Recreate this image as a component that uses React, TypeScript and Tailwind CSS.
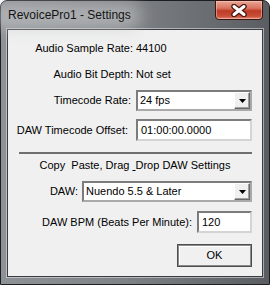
import React from "react";

const font = { fontFamily: '"Liberation Sans", Arial, sans-serif' };

const Arrow = () => (
  <div className="flex h-full w-[16px] items-center justify-center border border-t-white border-l-white border-b-[#696969] border-r-[#696969] bg-[#f0f0f0] shadow-[inset_-1px_-1px_0_#a0a0a0]">
    <svg width="7" height="4" viewBox="0 0 7 4">
      <path d="M0 0h7L3.5 4z" fill="#000" />
    </svg>
  </div>
);

const Combo = ({ value, width }: { value: string; width: string }) => (
  <div
    className={`flex h-[21px] ${width} items-stretch border-2 border-t-[#7c7c7c] border-l-[#7c7c7c] border-b-[#a9a9a9] border-r-[#a9a9a9] bg-white`}
  >
    <div className="flex flex-1 items-center pl-[2px] text-[11px] text-black">{value}</div>
    <Arrow />
  </div>
);

const Field = ({ value, width }: { value: string; width: string }) => (
  <div
    className={`flex h-[22px] ${width} items-center border-2 border-t-[#7c7c7c] border-l-[#7c7c7c] border-b-[#d4d4d4] border-r-[#d4d4d4] bg-white pl-[3px] text-[11px] text-black`}
  >
    {value}
  </div>
);

const CloseButton = () => (
  <div className="absolute right-[6px] top-[-1px] flex h-[20px] w-[48px] items-center justify-center rounded-b-[4px] border border-[#3b1510] bg-[linear-gradient(to_bottom,#e9a796_0%,#d9735f_40%,#bf3b25_55%,#c9503a_85%,#e38a6f_100%)] shadow-[inset_0_0_0_1px_rgba(255,220,210,0.45)]">
    <svg width="18" height="13" viewBox="0 0 18 13">
      <path d="M4 2.5l10 8M14 2.5L4 10.5" stroke="#4a1a12" strokeWidth="5.5" strokeLinecap="round" />
      <path d="M4 2.5l10 8M14 2.5L4 10.5" stroke="#ffffff" strokeWidth="3" strokeLinecap="round" />
    </svg>
  </div>
);

export default function App() {
  return (
    <div style={font} className="h-[285px] w-[270px] bg-white">
      <div className="flex h-[285px] w-[270px] flex-col rounded-t-[7px] border border-[#1c1f22] bg-[linear-gradient(to_right,#8e9195_0%,#7f8286_45%,#5a5d61_100%)]">
        <div className="relative h-[28px]">
          <div className="absolute left-[-10px] top-[2px] h-[26px] w-[150px] rounded-full bg-[#c9cbcd] opacity-60 blur-[8px]" />
          <div className="relative pl-[7px] pt-[7px] text-[12px] leading-[15px] text-[#141414]">
            RevoicePro1 - Settings
          </div>
          <CloseButton />
        </div>
        <div className="mx-[6px] mb-[7px] flex h-[248px] flex-col border border-[#3a3d40] bg-[#f0f0f0] text-[11px] text-black shadow-[0_0_0_1px_rgba(230,232,235,0.55)]">
          <div className="mt-[10px] flex h-[16px] items-center">
            <div className="w-[125px] text-right">Audio Sample Rate:</div>
            <div className="ml-[3px]">44100</div>
          </div>
          <div className="mt-[10px] flex h-[16px] items-center">
            <div className="w-[125px] text-right">Audio Bit Depth:</div>
            <div className="ml-[3px]">Not set</div>
          </div>
          <div className="mt-[8px] flex items-center">
            <div className="w-[123px] text-right">Timecode Rate:</div>
            <div className="ml-[5px]">
              <Combo value="24 fps" width="w-[116px]" />
            </div>
          </div>
          <div className="mt-[8px] flex items-center">
            <div className="w-[120px] text-right">DAW Timecode Offset:</div>
            <div className="ml-[8px]">
              <Field value="01:00:00.0000" width="w-[116px]" />
            </div>
          </div>
          <div className="mx-[11px] mr-[10px] mt-[11px] h-[2px] bg-[#6f6f6f]" />
          <div className="mt-[4px] flex h-[14px] items-center justify-center whitespace-pre">
            Copy  Paste, Drag <span className="underline"> </span>Drop DAW Settings
          </div>
          <div className="mt-[9px] flex items-center justify-end gap-[4px] pr-[10px]">
            <div>DAW:</div>
            <Combo value="Nuendo 5.5 & Later" width="w-[170px]" />
          </div>
          <div className="mt-[9px] flex items-center justify-end gap-[5px] pr-[10px]">
            <div>DAW BPM (Beats Per Minute):</div>
            <Field value="120" width="w-[55px]" />
          </div>
          <div className="mt-[11px] flex justify-end pr-[10px]">
            <button className="flex h-[23px] w-[75px] items-center justify-center border border-[#4e4e4e] bg-[#f0f0f0] text-[11px] text-black shadow-[inset_0_0_0_1px_#8a8a8a,inset_2px_2px_0_#ffffff]">
              OK
            </button>
          </div>
        </div>
      </div>
    </div>
  );
}
